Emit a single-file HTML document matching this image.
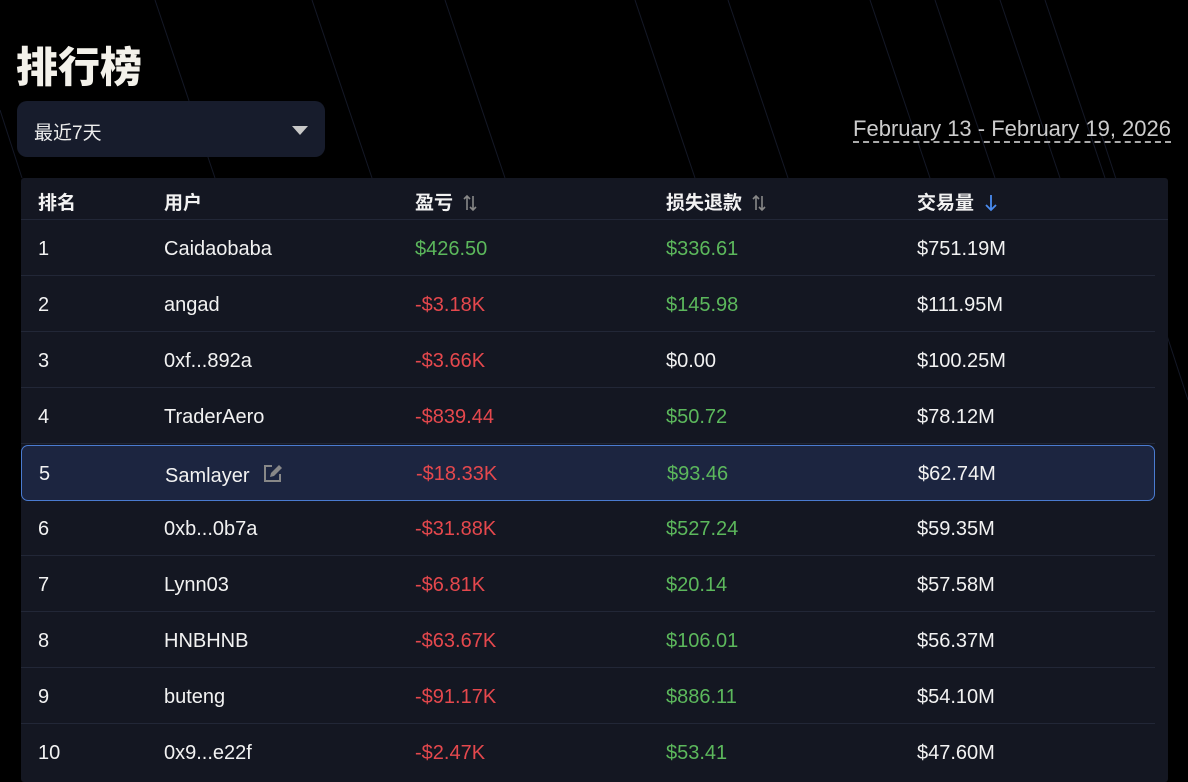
<!DOCTYPE html>
<html><head><meta charset="utf-8"><style>
*{margin:0;padding:0;box-sizing:border-box}
body{width:1188px;height:782px;background:#000;overflow:hidden;position:relative;font-family:"Liberation Sans","Noto Sans CJK SC",sans-serif;color:#f2f2f2}
svg.bg{position:absolute;left:0;top:0}
h1{position:absolute;left:16px;top:34px;font-size:42px;font-weight:900;color:#f3f1ea;letter-spacing:0}
.sel{position:absolute;left:17px;top:101px;width:308px;height:56px;background:#171c2c;border-radius:10px}
.sel span{position:absolute;left:17px;top:17px;font-size:19px;color:#eee}
.sel i{position:absolute;left:275px;top:25px;width:0;height:0;border-left:8px solid transparent;border-right:8px solid transparent;border-top:9px solid #c8c8c8}
.date{position:absolute;right:17px;top:117px;font-size:22px;color:#ccc;border-bottom:2px dashed #aaa;line-height:24px}
.tbl{position:absolute;left:21px;top:178px;width:1147px;height:604px;background:#141722;border-radius:3px}
.hd{position:absolute;left:0;top:0;width:1147px;height:42px;border-bottom:1px solid #222737;font-weight:700;font-size:19px}
.hd div,.r div{position:absolute}
.r{position:absolute;left:0;width:1134px;height:56px;border-bottom:1px solid #222737;font-size:20px}
.r div{top:18px}
.hl{background:#1c2540;border:1px solid #4a7bd0;border-radius:7px}
.hl div{top:17px}
.g{color:#5cb85c}.d{color:#e5484d}
.c1{left:17px}.c2{left:143px}.c3{left:394px}.c4{left:645px}.c5{left:896px}
.hd div{top:10px}
.ar{vertical-align:-3px;margin-left:10px}
</style></head><body>
<svg class="bg" width="1188" height="782"><g stroke="#141826" stroke-width="1">
<line x1="155" y1="0" x2="215" y2="178"/><line x1="0" y1="110" x2="22" y2="178"/><line x1="312" y1="0" x2="372" y2="178"/><line x1="445" y1="0" x2="505" y2="178"/><line x1="635" y1="0" x2="695" y2="178"/><line x1="728" y1="0" x2="788" y2="178"/><line x1="870" y1="0" x2="930" y2="178"/><line x1="935" y1="0" x2="995" y2="178"/><line x1="1000" y1="0" x2="1060" y2="178"/><line x1="1045" y1="0" x2="1105" y2="178"/><line x1="1100" y1="130" x2="1188" y2="400"/></g></svg>
<h1>排行榜</h1>
<div class="sel"><span>最近7天</span><i></i></div>
<div class="date">February 13 - February 19, 2026</div>
<div class="tbl">
<div class="hd"><div class="c1">排名</div><div class="c2">用户</div>
<div class="c3">盈亏<svg class="ar" width="14" height="18" viewBox="0 0 14 18"><path d="M4 16V2M1 5l3-3 3 3M10 2v14M7 13l3 3 3-3" fill="none" stroke="#888" stroke-width="1.6"/></svg></div>
<div class="c4">损失退款<svg class="ar" width="14" height="18" viewBox="0 0 14 18"><path d="M4 16V2M1 5l3-3 3 3M10 2v14M7 13l3 3 3-3" fill="none" stroke="#888" stroke-width="1.6"/></svg></div>
<div class="c5">交易量<svg class="ar" width="14" height="18" viewBox="0 0 14 18"><path d="M7 1v15M2 11l5 5 5-5" fill="none" stroke="#4a8cf0" stroke-width="1.8"/></svg></div></div>
<div class="r" style="top:42px"><div class="c1">1</div><div class="c2">Caidaobaba</div><div class="c3 g">$426.50</div><div class="c4 g">$336.61</div><div class="c5">$751.19M</div></div>
<div class="r" style="top:98px"><div class="c1">2</div><div class="c2">angad</div><div class="c3 d">-$3.18K</div><div class="c4 g">$145.98</div><div class="c5">$111.95M</div></div>
<div class="r" style="top:154px"><div class="c1">3</div><div class="c2">0xf...892a</div><div class="c3 d">-$3.66K</div><div class="c4">$0.00</div><div class="c5">$100.25M</div></div>
<div class="r" style="top:210px"><div class="c1">4</div><div class="c2">TraderAero</div><div class="c3 d">-$839.44</div><div class="c4 g">$50.72</div><div class="c5">$78.12M</div></div>
<div class="r hl" style="top:267px;height:56px"><div class="c1">5</div><div class="c2">Samlayer <svg width="22" height="22" viewBox="0 0 22 22" style="vertical-align:-3px;margin-left:6px"><path d="M11 3H4v15h15v-7" fill="none" stroke="#888" stroke-width="2"/><path d="M9 14l1-4 8-8 3 3-8 8z" fill="#888"/></svg></div><div class="c3 d">-$18.33K</div><div class="c4 g">$93.46</div><div class="c5">$62.74M</div></div>
<div class="r" style="top:322px"><div class="c1">6</div><div class="c2">0xb...0b7a</div><div class="c3 d">-$31.88K</div><div class="c4 g">$527.24</div><div class="c5">$59.35M</div></div>
<div class="r" style="top:378px"><div class="c1">7</div><div class="c2">Lynn03</div><div class="c3 d">-$6.81K</div><div class="c4 g">$20.14</div><div class="c5">$57.58M</div></div>
<div class="r" style="top:434px"><div class="c1">8</div><div class="c2">HNBHNB</div><div class="c3 d">-$63.67K</div><div class="c4 g">$106.01</div><div class="c5">$56.37M</div></div>
<div class="r" style="top:490px"><div class="c1">9</div><div class="c2">buteng</div><div class="c3 d">-$91.17K</div><div class="c4 g">$886.11</div><div class="c5">$54.10M</div></div>
<div class="r" style="top:546px;border:0"><div class="c1">10</div><div class="c2">0x9...e22f</div><div class="c3 d">-$2.47K</div><div class="c4 g">$53.41</div><div class="c5">$47.60M</div></div>
</div>
</body></html>
